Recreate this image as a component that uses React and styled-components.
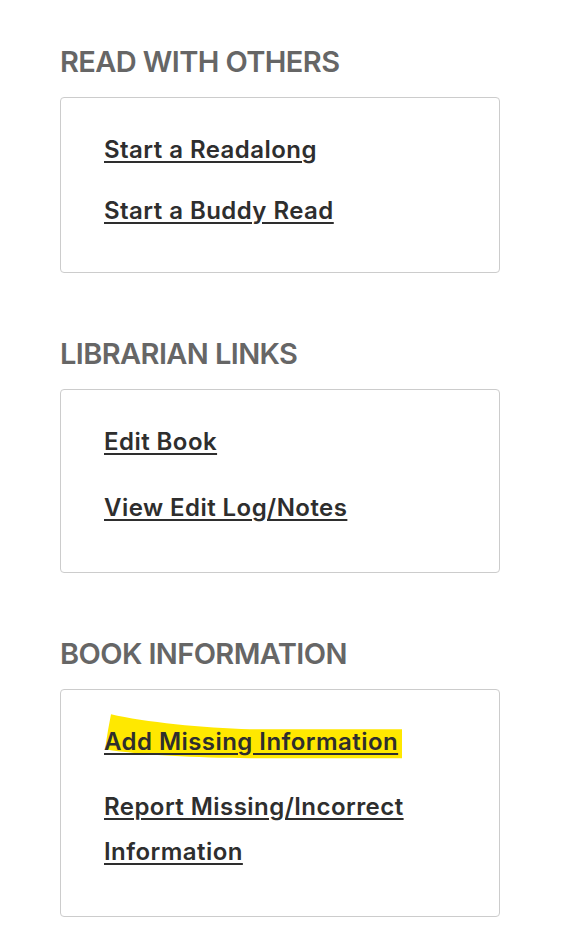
import React from "react";
import styled, { createGlobalStyle } from "styled-components";

const Global = createGlobalStyle`
  html, body { margin: 0; padding: 0; background: #ffffff; }
  body { font-family: Inter, "Open Sans", Arial, sans-serif; }
`;

const Page = styled.main`
  padding: 44px 0 40px 60px;
  display: flex;
  flex-direction: column;
  gap: 63px;
`;

const Section = styled.section`
  display: flex;
  flex-direction: column;
`;

const Heading = styled.h2`
  margin: 0 0 17px;
  font-size: 29px;
  line-height: 36px;
  font-weight: 600;
  color: #666666;
  letter-spacing: -0.6px;
`;

const Card = styled.div`
  box-sizing: border-box;
  width: 440px;
  border: 1px solid #cccccc;
  border-radius: 4px;
  padding: 29px 44px ${(p) => p.$pb}px 43px;
  display: flex;
  flex-direction: column;
  gap: ${(p) => p.$gap}px;
`;

const LinkRow = styled.div`
  position: relative;
  isolation: isolate;
  font-size: 24px;
  line-height: 45px;
`;

const Link = styled.a`
  font-weight: 600;
  color: #2e2e2e;
  letter-spacing: 0.45px;
  text-decoration: underline;
  text-decoration-thickness: 1.5px;
  text-underline-offset: 3px;
  cursor: pointer;
`;

const Marker = styled.svg`
  position: absolute;
  left: 0;
  top: -6px;
  width: 300px;
  height: 48px;
  z-index: -1;
  pointer-events: none;
`;

const Highlight = () => (
  <Marker viewBox="0 0 300 48" aria-hidden="true">
    <path
      d="M7,1.2 C40,9 100,15 146,16.2 L298,16.2 L298,45.2 L146,45.2 C90,44.5 40,42.5 1,36.2 L4,17.2 Z"
      fill="#ffe800"
    />
  </Marker>
);

const sections = [
  {
    title: "READ WITH OTHERS",
    gap: 16,
    pb: 39,
    links: ["Start a Readalong", "Start a Buddy Read"],
  },
  {
    title: "LIBRARIAN LINKS",
    gap: 21,
    pb: 42,
    links: ["Edit Book", "View Edit Log/Notes"],
  },
  {
    title: "BOOK INFORMATION",
    gap: 20,
    pb: 42,
    links: ["Add Missing Information", "Report Missing/Incorrect Information"],
    highlight: 0,
  },
];

export default function App() {
  return (
    <>
      <Global />
      <Page>
        {sections.map((s) => (
          <Section key={s.title}>
            <Heading>{s.title}</Heading>
            <Card $gap={s.gap} $pb={s.pb}>
              {s.links.map((l, i) => (
                <LinkRow key={l}>
                  {s.highlight === i && <Highlight />}
                  <Link>{l}</Link>
                </LinkRow>
              ))}
            </Card>
          </Section>
        ))}
      </Page>
    </>
  );
}
